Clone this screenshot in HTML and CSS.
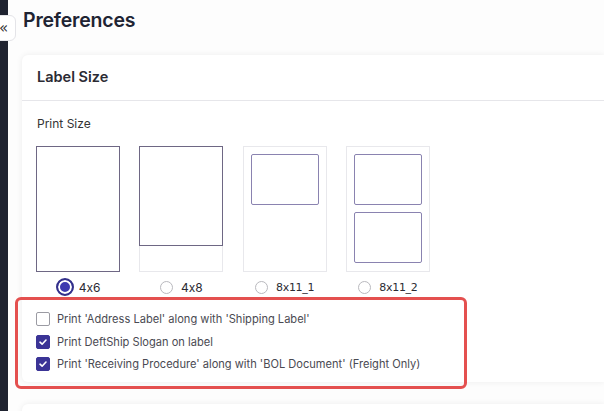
FILE: index.html
```html
<!DOCTYPE html>
<html>
<head>
<meta charset="utf-8">
<link rel="stylesheet" href="styles.css">
</head>
<body>
<div class="app">
  <aside class="sidebar"></aside>
  <button class="collapse">«</button>
  <main class="main">
    <h1 class="title">Preferences</h1>
    <section class="card">
      <div class="card-head">Label Size</div>
      <div class="card-body">
        <div class="field-label">Print Size</div>
        <div class="sizes">
          <div class="size">
            <div class="thumb thumb-full"></div>
            <div class="opt"><span class="radio radio-on"></span><span>4x6</span></div>
          </div>
          <div class="size">
            <div class="thumb thumb-light"><div class="inner-48"></div></div>
            <div class="opt"><span class="radio"></span><span>4x8</span></div>
          </div>
          <div class="size">
            <div class="thumb thumb-light pad"><div class="inner-half"></div></div>
            <div class="opt"><span class="radio"></span><span class="poppins">8x11_1</span></div>
          </div>
          <div class="size">
            <div class="thumb thumb-light pad"><div class="inner-half"></div><div class="inner-half"></div></div>
            <div class="opt"><span class="radio"></span><span class="poppins">8x11_2</span></div>
          </div>
        </div>
        <div class="checks">
          <label class="check"><span class="box"></span>Print 'Address Label' along with 'Shipping Label'</label>
          <label class="check"><span class="box box-on"><svg viewBox="0 0 14 14" width="14" height="14"><path d="M4 7.2 L6.1 9.2 L10 5" fill="none" stroke="#fff" stroke-width="1.6" stroke-linecap="round" stroke-linejoin="round"/></svg></span>Print DeftShip Slogan on label</label>
          <label class="check"><span class="box box-on"><svg viewBox="0 0 14 14" width="14" height="14"><path d="M4 7.2 L6.1 9.2 L10 5" fill="none" stroke="#fff" stroke-width="1.6" stroke-linecap="round" stroke-linejoin="round"/></svg></span>Print 'Receiving Procedure' along with 'BOL Document' (Freight Only)</label>
        </div>
      </div>
      <div class="highlight"></div>
    </section>
    <section class="card card-next"></section>
  </main>
</div>
</body>
</html>
```

FILE: styles.css
```css
* { box-sizing: border-box; }
html, body { margin: 0; padding: 0; }
body {
  background: #fdfdfd;
  font-family: Inter, "Liberation Sans", sans-serif;
  font-feature-settings: "calt" 0;
  color: #2b2b33;
  overflow: hidden;
  height: 411px;
}
.app { display: flex; position: relative; height: 411px; overflow: hidden; }
.sidebar { width: 8px; background: #1f2330; flex: none; }
.collapse {
  position: absolute;
  left: -10px;
  top: 15px;
  width: 26px;
  height: 26px;
  border: 1px solid #e4e4e8;
  border-radius: 6px;
  background: #fff;
  font-family: "DejaVu Sans", sans-serif;
  font-size: 15px;
  line-height: 22px;
  padding: 0 0 0 8px;
  text-align: left;
  color: #333;
  z-index: 2;
}
.main { flex: 1; padding: 0 0 0 14px; min-width: 0; overflow: hidden; }
.title {
  margin: 8px 0 0 1px;
  font-size: 19.5px;
  font-weight: 600;
  line-height: 24px;
  color: #1f2433;
  letter-spacing: -0.2px;
}
.card {
  position: relative;
  margin-top: 23px;
  background: #fff;
  border-radius: 6px 0 0 6px;
  box-shadow: 0 0 6px rgba(0,0,0,0.07);
  height: 327px;
}
.card-head {
  height: 46px;
  padding: 0 15px;
  border-bottom: 1px solid #e6e6ea;
  font-size: 14.5px;
  font-weight: 600;
  line-height: 44px;
  color: #2b2b33;
}
.card-body { padding: 15px 14px 0 14px; }
.field-label { font-size: 12px; line-height: 16px; color: #333; margin-left: 1px; }
.sizes { display: flex; gap: 19.3px; margin-top: 14px; }
.size { width: 84px; display: flex; flex-direction: column; align-items: center; }
.thumb {
  width: 84px;
  height: 126px;
  display: flex;
  flex-direction: column;
  align-items: center;
}
.thumb-full { border: 1px solid #6e6784; }
.thumb-light { border: 1px solid #e8e8ec; }
.inner-48 {
  margin: -1px -1px 0 -1px;
  width: 84px;
  height: 100px;
  border: 1px solid #6e6784;
}
.pad { padding-top: 7px; gap: 7px; }
.inner-half {
  width: 68px;
  height: 51px;
  border: 1.5px solid #8a83b0;
  border-radius: 2px;
}
.opt {
  display: flex;
  align-items: center;
  gap: 5px;
  margin-top: 6px;
  height: 18px;
  font-size: 12px;
  color: #2b2b33;
}
.poppins { font-family: "DejaVu Sans", sans-serif; font-size: 11px; letter-spacing: -0.3px; }
.radio {
  width: 13px;
  height: 13px;
  border-radius: 50%;
  border: 1px solid #b9b9be;
  background: #fff;
  margin-right: 3px;
}
.radio-on {
  width: 18px;
  height: 18px;
  border: 2px solid #33308a;
  background: #3d39b0;
  box-shadow: inset 0 0 0 2px #fff;
  margin-right: 0;
}
.checks {
  margin-top: 16px;
  display: flex;
  flex-direction: column;
  gap: 8.5px;
}
.check {
  display: flex;
  align-items: center;
  gap: 7px;
  font-size: 11.1px;
  line-height: 14px;
  color: #4a4a52;
}
.box {
  width: 14px;
  height: 14px;
  border: 1px solid #9b9ba3;
  border-radius: 2px;
  background: #fff;
  flex: none;
  display: flex;
}
.box-on { background: #3b3496; border-color: #3b3496; }
.box-on svg { margin: -1px; }
.highlight {
  position: absolute;
  left: -7px;
  top: 242px;
  width: 452px;
  height: 92px;
  border: 3px solid #e4504f;
  border-radius: 6px;
  pointer-events: none;
}
.card-next { margin-top: 22px; height: 60px; }
```
